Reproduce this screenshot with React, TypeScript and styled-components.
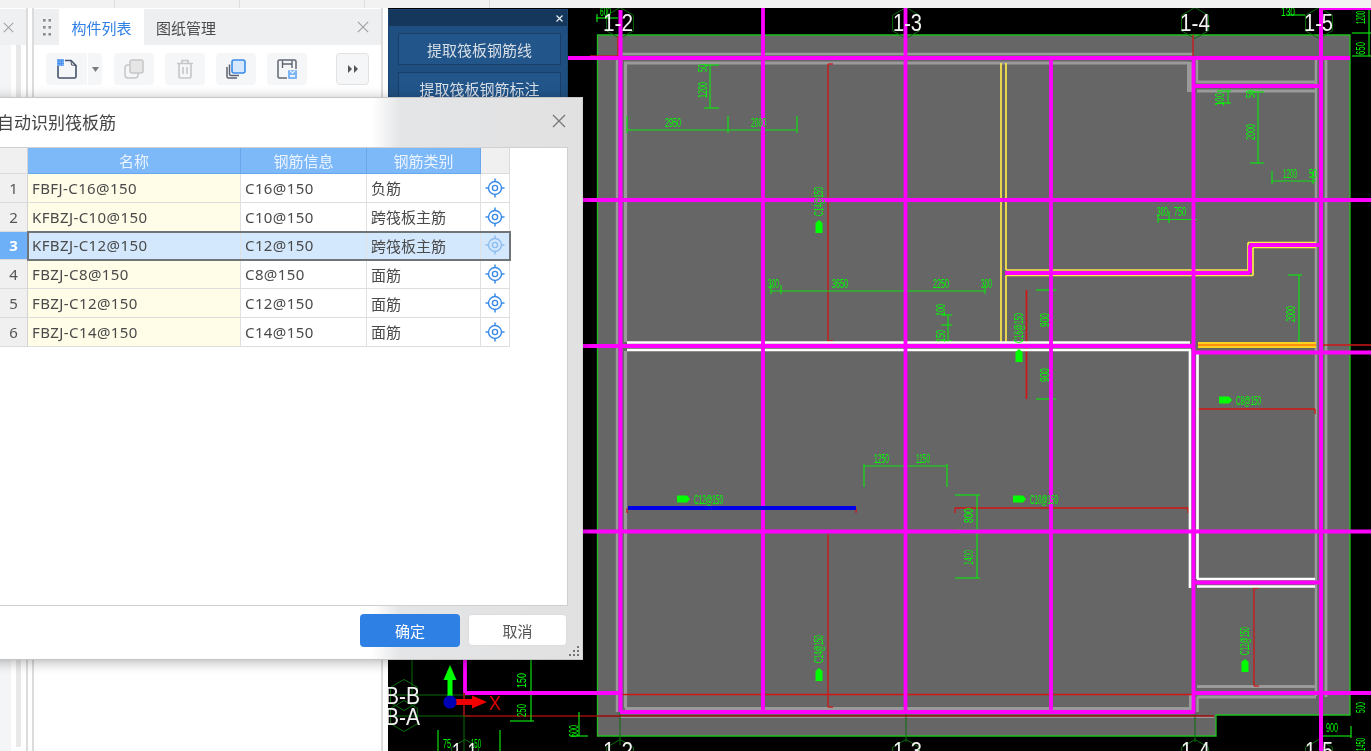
import React from "react";
import styled, { createGlobalStyle } from "styled-components";

const Global = createGlobalStyle`
  html, body { margin: 0; padding: 0; background: #fff; overflow: hidden; }
  * { box-sizing: border-box; }
`;

const UI_FONT = `"Noto Sans", "Noto Sans CJK SC", sans-serif`;

const Page = styled.div`
  position: relative;
  width: 1371px;
  height: 751px;
  overflow: hidden;
  display: flex;
  flex-direction: column;
  font-family: ${UI_FONT};
  filter: blur(0.45px);
`;
const TopStrip = styled.div`
  height: 8px;
  flex: none;
  display: flex;
  background: #f2f2f2;
`;
const StripCell = styled.div<{ $w: number }>`
  width: ${(p) => p.$w}px;
  flex: none;
  border-right: 1px solid #dedede;
`;
const Body = styled.div`
  flex: 1;
  display: flex;
  min-height: 0;
`;
const LeftColumn = styled.div`
  width: 388px;
  flex: none;
  display: flex;
  background: #fff;
`;
const RailPane = styled.div`
  width: 11px;
  flex: none;
  display: flex;
  flex-direction: column;
  background: #f3f5f7;
`;
const PaneOne = styled.div`
  width: 28px;
  flex: none;
  display: flex;
  flex-direction: column;
  border-right: 2px solid #dcdcdc;
`;
const PaneOneHead = styled.div`
  height: 36px;
  margin-top: 1px;
  flex: none;
  background: #eff0f2;
  display: flex;
  align-items: center;
  color: #999;
`;
const PaneOneBody = styled.div`
  flex: 1;
  display: flex;
`;
const RailSpace = styled.div<{ $w: number }>`
  width: ${(p) => p.$w}px;
  flex: none;
`;
const RailGroove = styled.div`
  width: 5px;
  flex: none;
  height: calc(100% - 4px);
  background: #e8e8e8;
`;
const PaneGap = styled.div`
  width: 4px;
  flex: none;
`;
const PaneTwo = styled.div`
  width: 351px;
  flex: none;
  display: flex;
  flex-direction: column;
  border-left: 2px solid #dcdcdc;
  border-right: 2px solid #dcdcdc;
`;
const TabBar = styled.div`
  height: 36px;
  margin-top: 1px;
  flex: none;
  display: flex;
  align-items: stretch;
  background: #eeeff1;
  font-size: 15px;
`;
const Grip = styled.div`
  width: 25px;
  flex: none;
  display: flex;
  align-items: center;
  justify-content: center;
`;
const Tab = styled.div<{ $active?: boolean }>`
  width: ${(p) => (p.$active ? 85 : 84)}px;
  flex: none;
  display: flex;
  align-items: center;
  justify-content: center;
  background: ${(p) => (p.$active ? "#fff" : "transparent")};
  color: ${(p) => (p.$active ? "#2f7fe6" : "#4a4a4a")};
`;
const TabSpacer = styled.div`
  flex: 1;
`;
const TabClose = styled.div`
  width: 36px;
  flex: none;
  display: flex;
  align-items: center;
  justify-content: center;
`;
const Toolbar = styled.div`
  display: flex;
  align-items: center;
  padding: 8px 0 0 12px;
`;
const ToolButton = styled.div<{ $w?: number; $gap?: number }>`
  width: ${(p) => p.$w ?? 40}px;
  height: 32px;
  margin-right: ${(p) => p.$gap ?? 11}px;
  flex: none;
  background: #f5f6f8;
  border-radius: 4px;
  display: flex;
  align-items: center;
  justify-content: center;
`;
const DropPart = styled(ToolButton)`
  width: 15px;
  border-left: 1px solid #fff;
  border-radius: 0 4px 4px 0;
`;
const NewPart = styled(ToolButton)`
  width: 41px;
  margin-right: 0;
  border-radius: 4px 0 0 4px;
`;
const ExpandButton = styled(ToolButton)`
  width: 33px;
  margin: 0 0 0 29px;
  border: 1px solid #e2e2e2;
`;

const CanvasArea = styled.div`
  position: relative;
  flex: 1;
  background: #000;
  overflow: hidden;
`;
const CadSvg = styled.svg`
  display: block;
  width: 983px;
  height: 743px;
`;
const CadLabel = styled.text`
  font-family: "Liberation Sans", sans-serif;
`;

const FloatPanel = styled.div`
  position: absolute;
  left: 0;
  top: 1px;
  width: 180px;
  height: 140px;
  background: #1f4f80;
  display: flex;
  flex-direction: column;
  border: 1px solid #1a4470;
`;
const FloatHead = styled.div`
  height: 16px;
  flex: none;
  background: #15375c;
  color: #dfe6ee;
  display: flex;
  justify-content: flex-end;
  align-items: center;
  padding-right: 4px;
`;
const FloatButton = styled.div`
  height: 32px;
  margin: 7px 6px 0 9px;
  flex: none;
  background: #22558a;
  border: 1px solid #193f69;
  color: #d9dfe6;
  font-size: 15px;
  display: flex;
  align-items: center;
  justify-content: center;
`;

const Dialog = styled.div`
  position: absolute;
  left: -20px;
  top: 97px;
  width: 603px;
  height: 563px;
  display: flex;
  flex-direction: column;
  background: linear-gradient(90deg, #fff 0, #fff 392px, #e4e5e7 420px, #e1e1e1 100%);
  border-top: 1px solid #c8c8c8;
  border-bottom: 1px solid #c4c4c4;
  border-right: 1px solid #d0d0d0;
  box-shadow: 0 2px 12px rgba(0, 0, 0, 0.3);
  z-index: 5;
`;
const DialogHead = styled.div`
  height: 49px;
  flex: none;
  display: flex;
  align-items: center;
  justify-content: space-between;
  padding: 0 16px 3px 16px;
  font-size: 17px;
  color: #444;
`;
const DialogTitle = styled.div`
  margin-left: 1px;
`;
const TableFrame = styled.div`
  flex: 1;
  margin: 0 14px 0 20px;
  background: #fff;
  border: 1px solid #cfcfcf;
  border-left: none;
`;
const Row = styled.div`
  display: flex;
  height: 28.8px;
`;
const HeadRow = styled.div`
  display: flex;
  height: 26px;
`;
const RowHead = styled.div<{ $active?: boolean }>`
  width: 28px;
  flex: none;
  display: flex;
  align-items: center;
  justify-content: center;
  font-size: 15px;
  font-weight: ${(p) => (p.$active ? 700 : 400)};
  color: ${(p) => (p.$active ? "#fff" : "#555")};
  background: ${(p) => (p.$active ? "#6db0f8" : "#f0f0f0")};
  border-bottom: 1px solid #dcdcdc;
  border-right: 1px solid #d4d4d4;
`;
const CellGroup = styled.div<{ $active?: boolean }>`
  position: relative;
  display: grid;
  grid-template-columns: 213px 126px 114px 29px;
  background: ${(p) => (p.$active ? "#d3e8fd" : "transparent")};
  ${(p) => (p.$active ? "outline: 2px solid #6f7478; outline-offset: -1px; z-index: 2;" : "")}
`;
const Cell = styled.div<{ $name?: boolean; $active?: boolean }>`
  display: flex;
  align-items: center;
  padding-left: 4px;
  font-size: 15px;
  color: #4a4a4a;
  white-space: nowrap;
  background: ${(p) => (p.$name && !p.$active ? "#fffce8" : "transparent")};
  border-right: 1px solid #e0e0e0;
  border-bottom: 1px solid #dedede;
`;
const LatinCell = styled(Cell)`
  letter-spacing: 0.4px;
`;
const IconCell = styled(Cell)<{ $dim?: boolean }>`
  padding-left: 0;
  justify-content: center;
  color: ${(p) => (p.$dim ? "#8dbcf0" : "#3a8be8")};
`;
const HeadCell = styled.div`
  display: flex;
  align-items: center;
  justify-content: center;
  font-size: 15px;
  color: #eaf4ff;
  background: #7db8f9;
  border-right: 1px solid #69a7ec;
  border-bottom: 1px solid #69a7ec;
`;
const HeadBlank = styled.div`
  background: #f0f0f0;
  border-bottom: 1px solid #dcdcdc;
  border-right: 1px solid #dcdcdc;
`;
const DialogFoot = styled.div`
  height: 53px;
  flex: none;
  position: relative;
  display: flex;
  justify-content: flex-end;
  align-items: flex-start;
  gap: 8px;
  padding: 8px 15px 0 0;
`;
const OkButton = styled.div`
  width: 100px;
  height: 33px;
  background: #2f80e4;
  color: #fff;
  border-radius: 4px;
  font-size: 15px;
  display: flex;
  align-items: center;
  justify-content: center;
`;
const CancelButton = styled.div`
  width: 99px;
  height: 32px;
  background: #fff;
  color: #555;
  border: 1px solid #dcdcdc;
  border-radius: 4px;
  font-size: 15px;
  display: flex;
  align-items: center;
  justify-content: center;
`;
const ResizeGrip = styled.svg`
  position: absolute;
  right: 3px;
  bottom: 3px;
  color: #777;
`;

const X = ({ s, c, w = 1.3 }: { s: number; c: string; w?: number }) => (
  <svg width={s} height={s} viewBox="0 0 14 14">
    <path d="M1 1L13 13M13 1L1 13" stroke={c} strokeWidth={w} fill="none" />
  </svg>
);

const GripDots = () => (
  <svg width="8" height="19" viewBox="0 0 8 19">
    {[1, 8, 15].flatMap((y) =>
      [0, 5.5].map((x) => <rect key={`${x}-${y}`} x={x} y={y} width="2.6" height="2.6" fill="#8a8a8a" />)
    )}
  </svg>
);

const NewIcon = () => (
  <svg width="22" height="22" viewBox="0 0 22 22">
    <path d="M2 8V18.5C2 19.3 2.7 20 3.5 20H18.5C19.3 20 20 19.3 20 18.5V7.5L15 2.5H9" fill="none" stroke="#47536a" strokeWidth="1.6" />
    <path d="M15 3L15.5 7L20 7.5" fill="none" stroke="#47536a" strokeWidth="1" />
    <rect x="1" y="1" width="7" height="7" fill="#7db4f5" />
    <path d="M1 3H8M1 5.5H8M3 1V8M5.5 1V8" stroke="#3a85e6" strokeWidth=".7" />
  </svg>
);
const CopyGrey = () => (
  <svg width="20" height="20" viewBox="0 0 20 20">
    <rect x="1" y="6" width="13" height="13" rx="3" fill="#f5f6f8" stroke="#c6c6c6" strokeWidth="1.5" />
    <rect x="6" y="1" width="13" height="13" rx="2" fill="#e6e6e6" stroke="#c6c6c6" strokeWidth="1.5" />
  </svg>
);
const TrashGrey = () => (
  <svg width="18" height="20" viewBox="0 0 18 20">
    <path d="M1 4.5H17M6 4V1.5H12V4M3 4.5V17.5C3 18.3 3.7 19 4.5 19H13.5C14.3 19 15 18.3 15 17.5V4.5M7 8V15M11 8V15" fill="none" stroke="#c6c6c6" strokeWidth="1.6" />
  </svg>
);
const CopyBlue = () => (
  <svg width="20" height="20" viewBox="0 0 20 20">
    <path d="M1 8V17.5C1 18.5 1.5 19 2.5 19H11M3.5 5.5V15C3.5 16 4 16.5 5 16.5H13" fill="none" stroke="#5b6270" strokeWidth="1.5" />
    <rect x="6" y="1" width="13" height="13" rx="2" fill="#d6e8fd" stroke="#3a8be8" strokeWidth="1.6" />
  </svg>
);
const SaveIcon = () => (
  <svg width="20" height="20" viewBox="0 0 20 20">
    <path d="M10 19H2.5C1.7 19 1 18.3 1 17.5V2.5C1 1.7 1.7 1 2.5 1H17.5C18.3 1 19 1.7 19 2.5V10" fill="none" stroke="#5f6672" strokeWidth="1.5" />
    <path d="M5.5 1.5V9M15 1.5V9M5.5 5H15" fill="none" stroke="#5f6672" strokeWidth="1.4" />
    <rect x="11" y="11" width="9" height="9" rx="1" fill="#7db4f5" />
    <path d="M13 11.5L15.5 14L18 11.5" fill="none" stroke="#eaf3fe" strokeWidth="1.1" />
    <rect x="13" y="16" width="5" height="2" fill="#eaf3fe" />
  </svg>
);
const Caret = () => (
  <svg width="7" height="5" viewBox="0 0 7 5">
    <path d="M0 0H7L3.5 5Z" fill="#7c7c7c" />
  </svg>
);
const DoubleArrow = () => (
  <svg width="10" height="8" viewBox="0 0 10 8">
    <path d="M0 0L4 4L0 8ZM6 0L10 4L6 8Z" fill="#555" />
  </svg>
);
const LocateIcon = () => (
  <svg width="20" height="20" viewBox="0 0 20 20">
    <circle cx="10" cy="10" r="6.5" fill="none" stroke="currentColor" strokeWidth="1.4" />
    <circle cx="10" cy="10" r="2.6" fill="none" stroke="currentColor" strokeWidth="1.4" />
    <path d="M10 .5V4M10 16V19.5M.5 10H4M16 10H19.5" stroke="currentColor" strokeWidth="1.5" />
  </svg>
);

const rows: [string, string, string][] = [
  ["FBFJ-C16@150", "C16@150", "负筋"],
  ["KFBZJ-C10@150", "C10@150", "跨筏板主筋"],
  ["KFBZJ-C12@150", "C12@150", "跨筏板主筋"],
  ["FBZJ-C8@150", "C8@150", "面筋"],
  ["FBZJ-C12@150", "C12@150", "面筋"],
  ["FBZJ-C14@150", "C14@150", "面筋"],
];

type Seg = [number, number, number, number, number?];
const Lines = ({ color, width, segs }: { color: string; width: number; segs: Seg[] }) => (
  <g stroke={color} strokeWidth={width} fill="none">
    {segs.map((s, i) => (
      <line key={i} x1={s[0]} y1={s[1]} x2={s[2]} y2={s[3]} strokeWidth={s[4] ?? width} />
    ))}
  </g>
);

const grey: Seg[] = [
  [618, 54, 1193, 54, 2.5],
  [624, 63, 1189, 63, 3.2],
  [625.5, 63, 625.5, 342, 3.2],
  [625.5, 351, 625.5, 708, 3.2],
  [617, 56, 617, 712, 2.4],
  [625, 708.5, 1191, 708.5, 3.2],
  [620, 717, 1214, 717, 1.8],
  [1189.5, 62, 1189.5, 92, 5],
  [1190.5, 695, 1190.5, 710, 3],
  [1197, 60, 1197, 83, 2.4],
  [1197, 82, 1316, 82, 2.8],
  [1197, 91, 1316, 91, 2.8],
  [1316, 60, 1316, 696, 2.6],
  [1326, 60, 1326, 697, 2.8],
  [1197, 686.5, 1316, 686.5, 2.8],
  [1197, 697, 1316, 697, 2.8],
  [1197.5, 697, 1197.5, 712, 2.4],
];
const darkGreen: Seg[] = [
  [620, 712, 620, 745],
  [906, 712, 906, 742],
  [1195, 712, 1195, 742],
  [1320, 715, 1320, 735],
  [412, 660, 412, 695],
  [388, 695, 470, 695],
  [388, 716, 470, 716],
  [464, 716, 464, 751],
];
const red: Seg[] = [
  [828, 64, 828, 341],
  [828, 64, 833, 64],
  [828, 341, 833, 341],
  [828, 534, 828, 707],
  [828, 707, 833, 707],
  [1026.5, 290, 1026.5, 399, 1.7],
  [1198, 409, 1315, 409],
  [1198, 409, 1198, 414],
  [1315, 409, 1315, 414],
  [955, 508, 1188, 508],
  [955, 508, 955, 513],
  [1188, 508, 1188, 513],
  [1254, 588, 1254, 686],
  [1254, 588, 1259, 588],
  [1254, 686, 1259, 686],
  [620, 694.5, 1193, 694.5],
  [1193, 35, 1193, 58],
  [590, 56, 618, 56],
  [618, 36, 618, 56],
  [1321, 345, 1371, 345],
  [627, 508, 627, 513],
  [856, 508, 856, 513],
  [464, 693, 464, 716],
];
const darkRed: Seg[] = [[465, 716, 1214, 716, 1.6]];
const green: Seg[] = [
  [627, 130, 797, 130], [627, 116, 627, 133], [728, 116, 728, 133], [797, 116, 797, 133],
  [710, 65, 710, 108], [704, 65, 719, 65], [704, 108, 719, 108],
  [771, 291, 985, 291], [771, 285, 771, 294], [781, 285, 781, 294], [985, 285, 985, 294],
  [948, 315, 948, 341], [941, 315, 952, 315], [941, 325, 952, 325], [941, 341, 952, 341],
  [596, 18, 618, 18], [597, 14, 597, 22],
  [1228, 90, 1228, 104], [1217, 91, 1231, 91], [1217, 103, 1231, 103],
  [1258, 92, 1258, 163], [1248, 92, 1264, 92], [1250, 163, 1264, 163],
  [1272, 181, 1316, 181], [1272, 171, 1272, 184], [1313, 171, 1313, 184],
  [1158, 219.5, 1197, 219.5], [1169, 211, 1169, 223], [1158, 215, 1158, 223],
  [1299, 275, 1299, 345], [1288, 275, 1302, 275], [1288, 345, 1302, 345, 2],
  [1036, 290, 1056, 290], [1036, 399, 1056, 399],
  [864, 466, 947, 466], [864, 464, 864, 487], [947, 464, 947, 487],
  [977, 495, 977, 578], [955, 495, 980, 495], [955, 530, 980, 530], [955, 578, 980, 578],
  [1351, 726, 1351, 738], [1320, 736, 1351, 736],
  [531, 660, 531, 721], [510, 721, 534, 721],
  [579, 712, 579, 736], [570, 736, 588, 736],
  [438, 730, 438, 751], [500, 730, 500, 751],
  [1305, 15, 1288, 15], [1369, 10, 1369, 56], [1352, 33, 1371, 33], [1352, 56, 1371, 56],
];
const yellow: Seg[] = [
  [1001, 63, 1001, 342],
  [1006, 63, 1006, 270],
  [1006, 270, 1248, 270],
  [1006, 275.5, 1253, 275.5],
  [1006, 275.5, 1006, 342],
  [1248, 270, 1248, 242.5],
  [1253, 275.5, 1253, 247.5],
  [1248, 242.5, 1316, 242.5],
  [1253, 247.5, 1316, 247.5],
];
const white: Seg[] = [
  [627, 342.5, 1190, 342.5],
  [627, 350, 1191, 350],
  [1190, 350, 1190, 588],
  [1197.5, 352, 1197.5, 579],
  [1197, 579, 1315, 579],
  [1197, 586.5, 1315, 586.5],
];
const magenta: Seg[] = [
  [620.5, 10, 620.5, 712, 4],
  [763, 8, 763, 712],
  [905.5, 8, 905.5, 712],
  [1051, 60, 1051, 712],
  [1193.5, 60, 1193.5, 714],
  [1321, 8, 1321, 751, 4],
  [388, 58, 1350, 58],
  [388, 200, 1371, 200],
  [388, 346, 1193, 346],
  [1195, 352.5, 1371, 352.5],
  [388, 531.5, 1371, 531.5],
  [1193, 693, 1371, 693],
  [465, 660, 465, 693],
  [465, 693, 620, 693],
  [620, 712, 1195, 712],
  [1193, 86, 1321, 86],
  [1193, 582.5, 1321, 582.5],
  [1005, 273, 1250, 273],
  [1250, 273, 1250, 245],
  [1250, 245, 1321, 245],
  [1323, 9, 1371, 9, 2],
];

const hexPoints = (cx: number, cy: number, r: number) =>
  [0, 1, 2, 3, 4, 5]
    .map((i) => {
      const a = (Math.PI / 3) * i - Math.PI / 2;
      return `${(cx + r * Math.cos(a)).toFixed(1)},${(cy + r * Math.sin(a)).toFixed(1)}`;
    })
    .join(" ");

const hexes: [number, number][] = [
  [620, 23], [906, 23], [1195, 23], [1319, 23],
  [620, 755], [906, 755], [1195, 755], [1319, 755],
  [404, 695], [404, 716], [465, 755],
];

type Hl = [string, number, number, number];
const dimH: Hl[] = [
  ["2950", 665, 127, 16], ["2000", 751, 127, 15],
  ["300", 768, 288, 11], ["3650", 832, 288, 16], ["2250", 933, 288, 16], ["300", 981, 288, 11],
  ["600", 600, 16, 11],
  ["1200", 1283, 178, 14], ["50", 1309, 178, 8],
  ["300", 1157, 216, 11], ["750", 1174, 216, 12],
  ["1250", 874, 463, 15], ["1150", 916, 463, 14],
  ["900", 1326, 732, 12], ["130", 1281, 16, 14],
  ["75", 443, 748, 8], ["150", 471, 748, 10],
];
const dimV: Hl[] = [
  ["50", 707, 72, 8], ["1200", 707, 98, 16],
  ["150", 945, 342, 12], ["100", 945, 316, 12],
  ["100", 1224, 106, 13], ["50", 1255, 98, 8], ["2000", 1255, 140, 16],
  ["2000", 1295, 322, 16], ["900", 1049, 327, 14], ["900", 1049, 382, 14],
  ["800", 973, 523, 15], ["1400", 973, 565, 15],
  ["150", 526, 688, 15], ["250", 526, 717, 13], ["600", 578, 737, 12],
  ["500", 1365, 713, 11], ["1450", 1365, 751, 13], ["1200", 1365, 24, 13], ["650", 1365, 55, 13],
];
const barV: Hl[] = [
  ["C14@150", 823, 216, 29], ["C14@150", 823, 663, 28],
  ["C16@150", 1023, 343, 30], ["C12@150", 1249, 655, 28],
];
const barH: Hl[] = [
  ["C12@150", 694, 504, 29], ["C10@150", 1030, 504, 28], ["C8@150", 1236, 405, 25],
];
const barMark: [number, number, boolean][] = [
  [677, 499, false], [1013, 499, false], [1219, 400, false],
  [819, 220, true], [819, 668, true], [1019, 349, true], [1245, 659, true],
];
const bubbles: Hl[] = [
  ["1-2", 603, 31, 30], ["1-3", 893, 31, 29], ["1-4", 1180, 31, 30], ["1-5", 1304, 31, 29],
  ["1-2", 603, 759, 30], ["1-3", 893, 759, 29], ["1-4", 1181, 759, 29], ["1-5", 1305, 759, 28],
  ["1-1", 452, 760, 25], ["B-B", 385, 704, 35], ["B-A", 385, 725, 35],
];

const CadDrawing = () => (
  <CadSvg viewBox="388 8 983 743">
    <rect x="388" y="8" width="983" height="743" fill="#000" />
    <polygon points="597.5,35 1350,35 1350,715 1216,715 1216,736 597.5,736" fill="#666" stroke="#20c020" strokeWidth="1.3" />
    <Lines color="#9a9a9a" width={2.5} segs={grey} />
    <Lines color="#0b6d0b" width={1} segs={darkGreen} />
    {hexes.map(([x, y], i) => (
      <polygon key={i} points={hexPoints(x, y, 15.5)} fill="none" stroke="#0b6d0b" strokeWidth="1" />
    ))}
    <Lines color="#d01616" width={1.3} segs={red} />
    <Lines color="#9c0c0c" width={1.6} segs={darkRed} />
    <Lines color="#10e010" width={1.2} segs={green} />
    <Lines color="#ffe94a" width={1.7} segs={yellow} />
    <rect x="1198" y="342" width="118" height="6" fill="#ffd21e" />
    <line x1="1198" y1="345" x2="1316" y2="345" stroke="#ff7a10" strokeWidth="1.5" />
    <Lines color="#ffffff" width={2.7} segs={white} />
    <Lines color="#ff00ff" width={3.8} segs={magenta} />
    <line x1="628" y1="508" x2="856" y2="508" stroke="#0000e6" strokeWidth="3.8" />

    <g fill="#00ff00">
      {dimH.map(([t, x, y, w], i) => (
        <CadLabel key={i} x={x} y={y} fontSize="12" textLength={w} lengthAdjust="spacingAndGlyphs">{t}</CadLabel>
      ))}
      {dimV.map(([t, x, y, w], i) => (
        <CadLabel key={i} x={x} y={y} fontSize="12" textLength={w} lengthAdjust="spacingAndGlyphs" transform={`rotate(-90 ${x} ${y})`}>{t}</CadLabel>
      ))}
      {barH.map(([t, x, y, w], i) => (
        <CadLabel key={i} x={x} y={y} fontSize="13" textLength={w} lengthAdjust="spacingAndGlyphs">{t}</CadLabel>
      ))}
      {barV.map(([t, x, y, w], i) => (
        <CadLabel key={i} x={x} y={y} fontSize="13" textLength={w} lengthAdjust="spacingAndGlyphs" transform={`rotate(-90 ${x} ${y})`}>{t}</CadLabel>
      ))}
      {barMark.map(([x, y, v], i) =>
        v ? (
          <path key={i} d={`M${x - 3.5} ${y + 13}h7v-10l-3.5 -3l-3.5 3z`} />
        ) : (
          <path key={i} d={`M${x} ${y - 3.5}h10l3 3.5l-3 3.5h-10z`} />
        )
      )}
    </g>
    <g fill="#f2f2f2">
      {bubbles.map(([t, x, y, w], i) => (
        <CadLabel key={i} x={x} y={y} fontSize="23" textLength={w} lengthAdjust="spacingAndGlyphs">{t}</CadLabel>
      ))}
    </g>
    <rect x="447.5" y="678" width="5" height="18" fill="#00ff00" />
    <path d="M450 665L456.5 680H443.5Z" fill="#00ff00" />
    <rect x="456" y="699" width="18" height="6" fill="#f00000" />
    <path d="M487 702L472 695.5V708.5Z" fill="#f00000" />
    <circle cx="450" cy="702" r="6.6" fill="#0000b4" />
    <CadLabel x="489" y="710" fontSize="20" fill="#e00000" textLength="12" lengthAdjust="spacingAndGlyphs">X</CadLabel>
  </CadSvg>
);

export default function App() {
  return (
    <Page>
      <Global />
      <TopStrip>
        <StripCell $w={115} />
        <StripCell $w={125} />
        <StripCell $w={125} />
        <StripCell $w={125} />
      </TopStrip>
      <Body>
        <LeftColumn>
          <PaneOne>
            <PaneOneHead>
              <RailSpace $w={3} />
              <X s={11} c="#a0a0a0" />
            </PaneOneHead>
            <PaneOneBody>
              <RailPane />
              <RailSpace $w={5} />
              <RailGroove />
            </PaneOneBody>
          </PaneOne>
          <PaneGap />
          <PaneTwo>
            <TabBar>
              <Grip><GripDots /></Grip>
              <Tab $active>构件列表</Tab>
              <Tab>图纸管理</Tab>
              <TabSpacer />
              <TabClose><X s={12} c="#a0a0a0" /></TabClose>
            </TabBar>
            <Toolbar>
              <NewPart><NewIcon /></NewPart>
              <DropPart $gap={12}><Caret /></DropPart>
              <ToolButton><CopyGrey /></ToolButton>
              <ToolButton><TrashGrey /></ToolButton>
              <ToolButton><CopyBlue /></ToolButton>
              <ToolButton $gap={0}><SaveIcon /></ToolButton>
              <ExpandButton $gap={0}><DoubleArrow /></ExpandButton>
            </Toolbar>
          </PaneTwo>
        </LeftColumn>
        <CanvasArea>
          <CadDrawing />
          <FloatPanel>
            <FloatHead><X s={7} c="#e6edf4" w={2.4} /></FloatHead>
            <FloatButton>提取筏板钢筋线</FloatButton>
            <FloatButton>提取筏板钢筋标注</FloatButton>
          </FloatPanel>
        </CanvasArea>
      </Body>
      <Dialog>
        <DialogHead>
          <DialogTitle>自动识别筏板筋</DialogTitle>
          <X s={14} c="#777" />
        </DialogHead>
        <TableFrame>
          <HeadRow>
            <RowHead />
            <CellGroup>
              <HeadCell>名称</HeadCell>
              <HeadCell>钢筋信息</HeadCell>
              <HeadCell>钢筋类别</HeadCell>
              <HeadBlank />
            </CellGroup>
          </HeadRow>
          {rows.map((r, i) => {
            const active = i === 2;
            return (
              <Row key={r[0]}>
                <RowHead $active={active}>{i + 1}</RowHead>
                <CellGroup $active={active}>
                  <LatinCell $name $active={active}>{r[0]}</LatinCell>
                  <LatinCell>{r[1]}</LatinCell>
                  <Cell>{r[2]}</Cell>
                  <IconCell $dim={active}><LocateIcon /></IconCell>
                </CellGroup>
              </Row>
            );
          })}
        </TableFrame>
        <DialogFoot>
          <OkButton>确定</OkButton>
          <CancelButton>取消</CancelButton>
          <ResizeGrip width="10" height="10" viewBox="0 0 10 10">
            {[[8, 0], [4, 4], [8, 4], [0, 8], [4, 8], [8, 8]].map(([x, y]) => (
              <rect key={`${x}-${y}`} x={x} y={y} width="2" height="2" fill="currentColor" />
            ))}
          </ResizeGrip>
        </DialogFoot>
      </Dialog>
    </Page>
  );
}
